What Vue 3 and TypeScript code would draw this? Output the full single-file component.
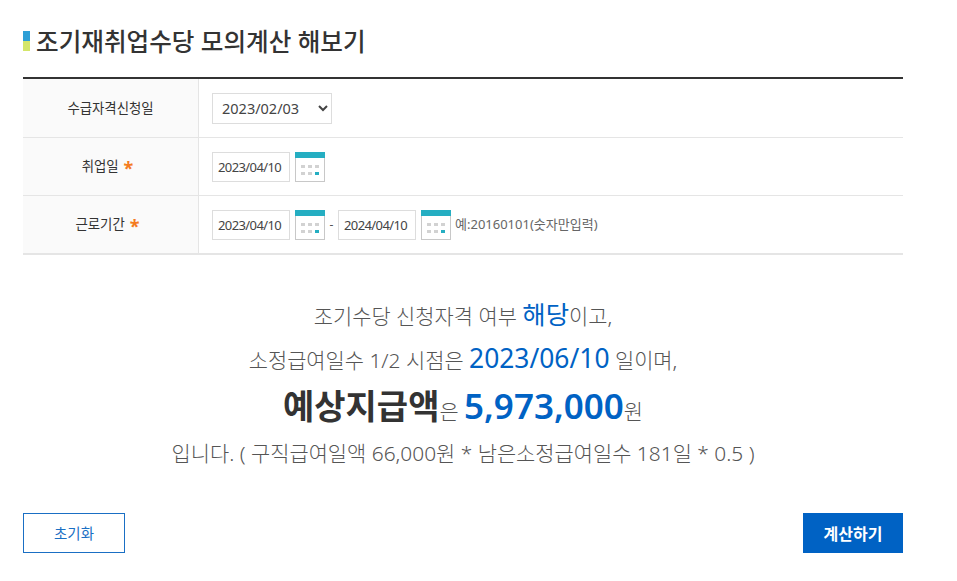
<script setup lang="ts">
import { ref } from 'vue'

const applyDate = ref('2023/02/03')
const hireDate = ref('2023/04/10')
const workStart = ref('2023/04/10')
const workEnd = ref('2024/04/10')
</script>

<template>
  <div class="calc">
    <h2 class="calc__title"><span class="calc__mark" /><span class="calc__text">조기재취업수당 모의계산 해보기</span></h2>

    <div class="form">
      <div class="form__row form__row--first">
        <div class="form__label">수급자격신청일</div>
        <div class="form__field">
          <select v-model="applyDate" class="select">
            <option>2023/02/03</option>
          </select>
        </div>
      </div>
      <div class="form__row">
        <div class="form__label form__label--req">취업일 <i class="req">*</i></div>
        <div class="form__field">
          <input v-model="hireDate" class="date" type="text" />
          <button type="button" class="cal" aria-label="달력">
            <svg width="30" height="30" viewBox="0 0 30 30">
              <rect x="0.5" y="0.5" width="29" height="29" fill="#fff" stroke="#c8c8c8" />
              <rect width="30" height="6" fill="#25aec2" />
              <path d="M6 13h4v3H6zM13 13h4v3h-4zM20 13h4v3h-4zM6 20h4v3H6zM13 20h4v3h-4z" fill="#d2d2d2" />
              <rect x="20" y="20" width="4" height="3" fill="#25aec2" />
            </svg>
          </button>
        </div>
      </div>
      <div class="form__row">
        <div class="form__label form__label--req">근로기간 <i class="req">*</i></div>
        <div class="form__field">
          <input v-model="workStart" class="date" type="text" />
          <button type="button" class="cal" aria-label="달력">
            <svg width="30" height="30" viewBox="0 0 30 30">
              <rect x="0.5" y="0.5" width="29" height="29" fill="#fff" stroke="#c8c8c8" />
              <rect width="30" height="6" fill="#25aec2" />
              <path d="M6 13h4v3H6zM13 13h4v3h-4zM20 13h4v3h-4zM6 20h4v3H6zM13 20h4v3h-4z" fill="#d2d2d2" />
              <rect x="20" y="20" width="4" height="3" fill="#25aec2" />
            </svg>
          </button>
          <span class="dash">-</span>
          <input v-model="workEnd" class="date" type="text" />
          <button type="button" class="cal" aria-label="달력">
            <svg width="30" height="30" viewBox="0 0 30 30">
              <rect x="0.5" y="0.5" width="29" height="29" fill="#fff" stroke="#c8c8c8" />
              <rect width="30" height="6" fill="#25aec2" />
              <path d="M6 13h4v3H6zM13 13h4v3h-4zM20 13h4v3h-4zM6 20h4v3H6zM13 20h4v3h-4z" fill="#d2d2d2" />
              <rect x="20" y="20" width="4" height="3" fill="#25aec2" />
            </svg>
          </button>
          <span class="hint">예:20160101(숫자만입력)</span>
        </div>
      </div>
    </div>

    <div class="result">
      <p class="result__line">조기수당 신청자격 여부 <em class="hl">해당</em>이고,</p>
      <p class="result__line">소정급여일수 1/2 시점은 <em class="hl hl--date">2023/06/10</em> 일이며,</p>
      <p class="result__line result__line--sum"><strong>예상지급액</strong>은 <em class="hl hl--big">5,973,000</em>원</p>
      <p class="result__line">입니다. ( 구직급여일액 66,000원 * 남은소정급여일수 181일 * 0.5 )</p>
    </div>

    <div class="actions">
      <button type="button" class="btn btn--line">초기화</button>
      <button type="button" class="btn btn--fill">계산하기</button>
    </div>
  </div>
</template>

<style scoped>
.calc {
  width: 880px;
  padding: 26px 0 0 23px;
  font-family: "Noto Sans", "Noto Sans CJK KR", sans-serif;
  color: #333;
}

.calc__title {
  display: flex;
  align-items: center;
  margin: 0 0 21px;
  height: 30px;
  font-size: 24.6px;
  font-weight: 500;
  line-height: 30px;
  color: #333;
}

.calc__text {
  margin-top: 2px;
}

.calc__mark {
  width: 7px;
  height: 20px;
  margin-right: 6px;
  background: linear-gradient(#2e9fd6 50%, #d4e66a 50%);
}

.form {
  border-top: 2px solid #333;
  border-bottom: 2px solid #e5e5e5;
}

.form__row {
  display: flex;
  height: 57px;
  border-bottom: 1px solid #e5e5e5;
}

.form__row--first {
  height: 58px;
}

.form__row:last-child {
  border-bottom: 0;
}

.form__label {
  display: flex;
  align-items: center;
  justify-content: center;
  gap: 5px;
  box-sizing: border-box;
  width: 176px;
  padding-bottom: 3px;
  border-right: 1px solid #e5e5e5;
  background: #fafafa;
  font-size: 13.4px;
}

.form__label--req {
  padding-right: 6px;
}

.req {
  font-style: normal;
  font-size: 18px;
  font-weight: 700;
  line-height: 18px;
  color: #f47b20;
  transform: translateY(3px);
}

.form__field {
  display: flex;
  align-items: center;
  padding-left: 13px;
  font-size: 13px;
}

.select {
  box-sizing: border-box;
  width: 120px;
  height: 31px;
  padding: 0 5px;
  border: 1px solid #ddd;
  border-radius: 0;
  background: #fff;
  font: inherit;
  font-size: 14.5px;
  color: #444;
}

.date {
  box-sizing: border-box;
  width: 78px;
  height: 30px;
  padding: 0 5px;
  border: 1px solid #ddd;
  font: inherit;
  font-size: 13px;
  letter-spacing: -0.6px;
  color: #444;
  outline: none;
}

.cal {
  display: block;
  width: 30px;
  height: 30px;
  margin-left: 5px;
  padding: 0;
  border: 0;
  background: none;
}

.dash {
  width: 13px;
  text-align: center;
  font-size: 12px;
  color: #555;
}

.hint {
  margin-left: 4px;
  padding-bottom: 2px;
  font-size: 13px;
  color: #666;
}

.result {
  margin-top: 37px;
  text-align: center;
  color: #555;
  font-weight: 300;
}

.result__line {
  margin: 0;
  height: 44px;
  line-height: 44px;
  font-size: 20.9px;
}

.result__line--sum {
  height: 50px;
  padding-top: 1px;
  line-height: 50px;
}

.result__line--sum strong {
  font-size: 34px;
  font-weight: 700;
  color: #333;
}

.hl {
  font-style: normal;
  font-size: 25.4px;
  font-weight: 400;
  color: #0062c4;
}

.hl--date {
  font-size: 26.4px;
}

.hl--big {
  font-size: 35px;
  font-weight: 600;
}

.actions {
  display: flex;
  justify-content: space-between;
  margin-top: 38px;
}

.btn {
  height: 40px;
  padding-bottom: 2px;
  font: inherit;
  font-size: 14.5px;
}

.btn--line {
  width: 102px;
  border: 1px solid #1a6fc4;
  background: #fff;
  color: #1a6fc4;
}

.btn--fill {
  width: 100px;
  border: 0;
  background: #0062c4;
  color: #fff;
  font-size: 16px;
  font-weight: 700;
}
</style>
